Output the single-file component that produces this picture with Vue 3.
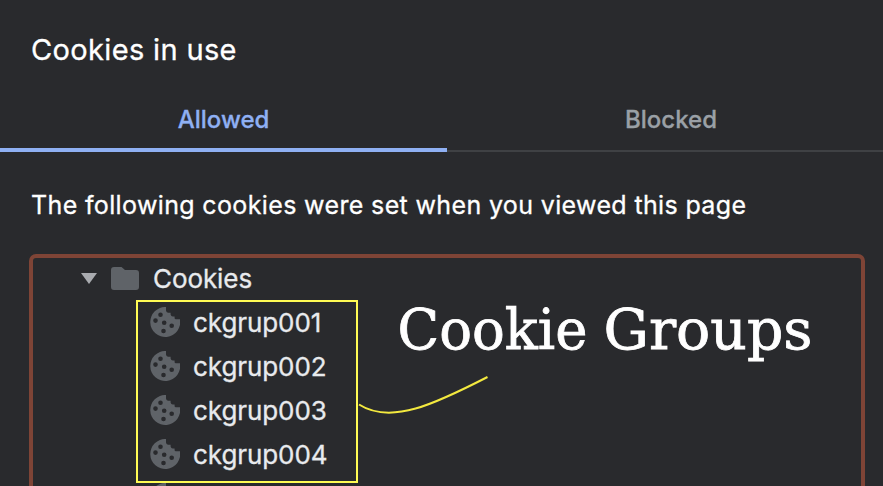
<script setup>
const cookies = ['ckgrup001', 'ckgrup002', 'ckgrup003', 'ckgrup004', '']
</script>

<template>
  <main class="dialog">
    <h1 class="title"><span>Cookies in use</span></h1>
    <nav class="tabs">
      <button class="tab active"><span>Allowed</span></button>
      <button class="tab"><span>Blocked</span></button>
    </nav>
    <p class="intro"><span>The following cookies were set when you viewed this page</span></p>
    <section class="tree">
      <div class="row parent">
        <svg class="arrow" viewBox="0 0 16 11"><path d="M0 0H16L8 11Z" /></svg>
        <svg class="folder" viewBox="0 0 28 23">
          <path d="M3 0H10.5L14 3H25Q28 3 28 6V20Q28 23 25 23H3Q0 23 0 20V3Q0 0 3 0Z" />
        </svg>
        <span class="label">Cookies</span>
      </div>
      <div v-for="(name, i) in cookies" :key="i" class="row child">
        <svg class="cookie" viewBox="0 0 30 30">
          <path
            fill-rule="evenodd"
            d="M16 0A15 15 0 1 0 30 12.2H25.8Q24.8 12.2 24.6 11.2V9.6H22.8Q21 9.4 20.6 7.4V5.8H18Q16.200 5.400 16 3.6ZM10.5 5.400a2.300 2.300 0 1 1 0 4.600a2.300 2.300 0 0 1 0-4.600ZM5.500 11.300a2.300 2.300 0 1 1 0 4.600a2.300 2.300 0 0 1 0-4.600ZM14.200 13.400a2.300 2.300 0 1 1 0 4.600a2.300 2.300 0 0 1 0-4.600ZM21.700 16.400a2.300 2.300 0 1 1 0 4.600a2.300 2.300 0 0 1 0-4.600ZM13.500 21.700a2.300 2.300 0 1 1 0 4.600a2.300 2.300 0 0 1 0-4.600Z"
          />
        </svg>
        <span class="label">{{ name }}</span>
      </div>
    </section>
    <div class="highlight"></div>
    <svg class="note" viewBox="0 0 525 206">
      <text x="39.5" y="69" textLength="190" lengthAdjust="spacingAndGlyphs">Cookie</text>
      <text x="245.5" y="69" textLength="209" lengthAdjust="spacingAndGlyphs">Groups</text>
      <path d="M1 124.5C33 145 77 124 129.5 97" />
    </svg>
  </main>
</template>

<style>
body {
  background: #292a2d;
  overflow: hidden;
}
</style>

<style scoped>
.dialog {
  position: relative;
  box-sizing: border-box;
  height: 486px;
  overflow: hidden;
  background: #292a2d;
  color: #fff;
  font-family: Inter, sans-serif;
  display: flex;
  flex-direction: column;
  -webkit-text-stroke: 0.3px currentColor;
}
.title {
  margin: 0;
  height: 88px;
  flex: none;
  padding: 11px 0 0 31px;
  box-sizing: border-box;
  font-size: 29px;
  font-weight: 400;
  letter-spacing: 0.35px;
  line-height: 77px;
}
.tabs {
  display: grid;
  grid-template-columns: 447px 448px;
  height: 64px;
  flex: none;
}
.tab {
  border: 0;
  border-bottom: 2px solid #3f4144;
  padding: 0;
  background: none;
  color: #9aa0a6;
  font: 500 24px Inter, sans-serif;
  -webkit-text-stroke: 0.3px currentColor;
  display: flex;
  align-items: center;
  justify-content: center;
}
.tab.active {
  border-bottom: 4px solid #8fb0f3;
  padding-top: 2px;
  color: #8fb0f3;
}
.intro {
  margin: 0;
  height: 102px;
  flex: none;
  padding-left: 31px;
  font-size: 25px;
  letter-spacing: 0.36px;
  line-height: 106px;
  white-space: nowrap;
}
.tree {
  flex: none;
  width: 836px;
  height: 300px;
  margin-left: 29px;
  box-sizing: border-box;
  border: 4px solid #7e4436;
  border-radius: 7px;
}
.row {
  height: 44px;
  display: flex;
  align-items: center;
  color: #e8eaed;
  font-size: 26px;
  letter-spacing: -0.08px;
}
.parent {
  padding-left: 48px;
  height: 41px;
  margin-bottom: 1px;
}
.child {
  padding-left: 117px;
}
.arrow {
  width: 16px;
  height: 11px;
  fill: #a9abaf;
}
.folder {
  width: 28px;
  height: 23px;
  margin: 0 14px;
  fill: #5f6368;
}
.cookie {
  width: 30px;
  height: 30px;
  margin-right: 13px;
  fill: #5f6368;
}
.highlight {
  position: absolute;
  left: 136px;
  top: 300px;
  width: 222px;
  height: 183px;
  box-sizing: border-box;
  border: 2px solid #fffb54;
}
.note {
  position: absolute;
  left: 358px;
  top: 280px;
  width: 525px;
  height: 206px;
}
.note text {
  fill: #fff;
  stroke: #fff;
  stroke-width: 0.8px;
  font: 56px 'DejaVu Serif', serif;
}
.note path {
  fill: none;
  stroke: #f3e93f;
  stroke-width: 2;
}
</style>
